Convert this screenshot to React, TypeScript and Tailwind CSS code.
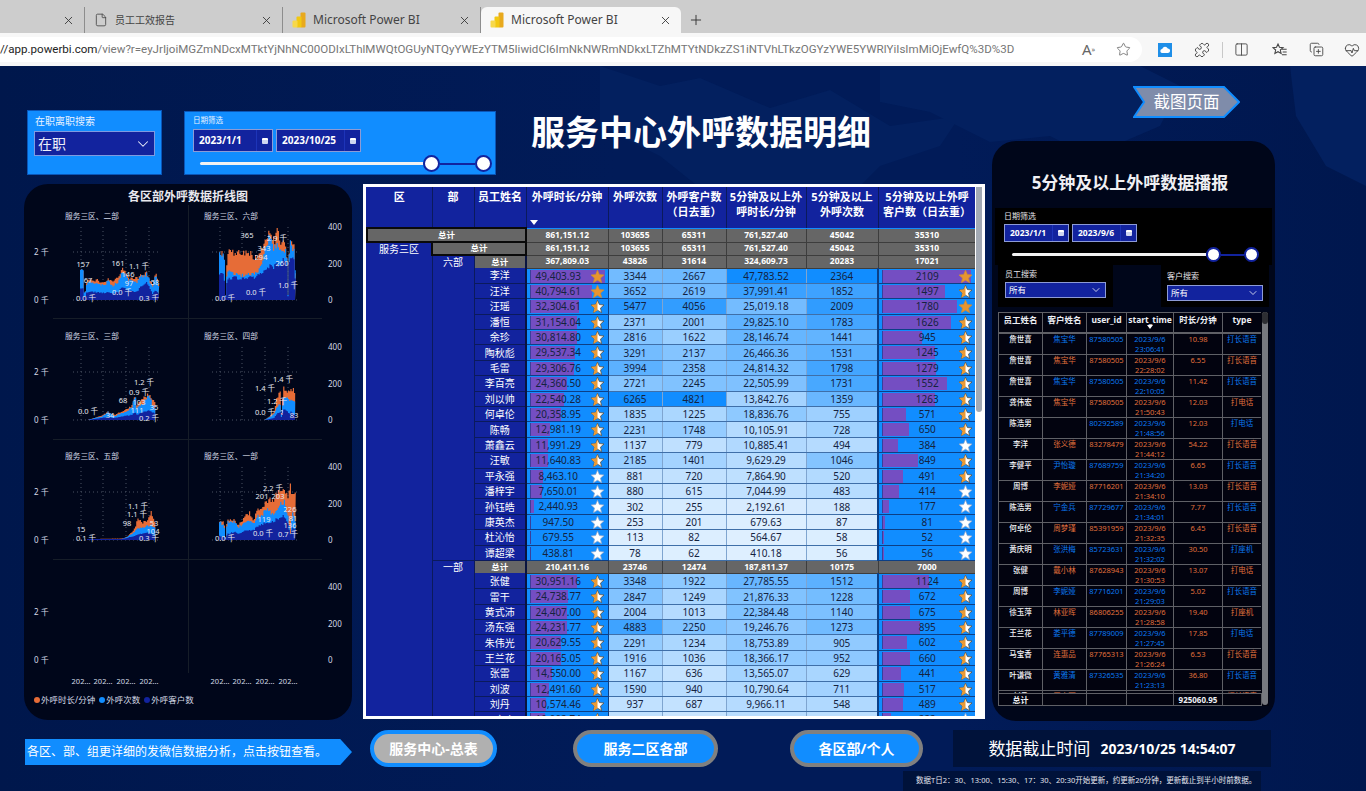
// App.tsx
// Power BI report "服务中心外呼数据明细" shown inside an Edge browser window.
import { ChevronDown, CopyPlus, Columns2, File, HeartPulse, Plus, Puzzle, Star, X } from "lucide-react";

// ── TABLE DATA ──
// name, duration, calls, customers, 5min duration, 5min calls, 5min customers
type Row = [string, number, number, number, number, number, number];

const groupSix: Row[] = [
  ["李洋", 49403.93, 3344, 2667, 47783.52, 2364, 2109],
  ["汪洋", 40794.61, 3652, 2619, 37991.41, 1852, 1497],
  ["汪瑶", 32304.61, 5477, 4056, 25019.18, 2009, 1780],
  ["潘恒", 31154.04, 2371, 2001, 29825.1, 1783, 1626],
  ["余珍", 30814.8, 2816, 1622, 28146.74, 1441, 945],
  ["陶秋彪", 29537.34, 3291, 2137, 26466.36, 1531, 1245],
  ["毛雷", 29306.76, 3994, 2358, 24814.32, 1798, 1279],
  ["李百亮", 24360.5, 2721, 2245, 22505.99, 1731, 1552],
  ["刘以帅", 22540.28, 6265, 4821, 13842.76, 1359, 1263],
  ["何卓伦", 20358.95, 1835, 1225, 18836.76, 755, 571],
  ["陈畅", 12981.19, 2231, 1748, 10105.91, 728, 650],
  ["萧鑫云", 11991.29, 1137, 779, 10885.41, 494, 384],
  ["汪敏", 11640.83, 2185, 1401, 9629.29, 1046, 849],
  ["平永强", 8463.1, 881, 720, 7864.9, 520, 491],
  ["潘梓宇", 7650.01, 880, 615, 7044.99, 483, 414],
  ["孙钰皓", 2440.93, 302, 255, 2192.61, 188, 177],
  ["康英杰", 947.5, 253, 201, 679.63, 87, 81],
  ["杜沁怡", 679.55, 113, 82, 564.67, 58, 52],
  ["谭超梁", 438.81, 78, 62, 410.18, 56, 56],
];

const groupOne: Row[] = [
  ["张健", 30951.16, 3348, 1922, 27785.55, 1512, 1124],
  ["雷干", 24738.77, 2847, 1249, 21876.33, 1228, 672],
  ["黄式沛", 24407.0, 2004, 1013, 22384.48, 1140, 675],
  ["汤东强", 24231.77, 4883, 2250, 19246.76, 1273, 895],
  ["朱伟光", 20629.55, 2291, 1234, 18753.89, 905, 602],
  ["王兰花", 20165.05, 1916, 1036, 18366.17, 952, 660],
  ["张雷", 14550.0, 1167, 636, 13565.07, 629, 441],
  ["刘波", 12491.6, 1590, 940, 10790.64, 711, 517],
  ["刘丹", 10574.46, 937, 687, 9966.11, 548, 489],
  ["马宗泰", 10002.74, 968, 566, 9061.18, 429, 222],
];

const money = (v: number) =>
  v.toLocaleString("en-US", { minimumFractionDigits: 2, maximumFractionDigits: 2 });

// Heat colour between the lightest cell and Power BI blue #118dff
function heat(v: number, max: number) {
  const t = Math.min(1, v / max);
  const mix = (a: number, b: number) => Math.round(a + (b - a) * t);
  return `rgb(${mix(224, 17)},${mix(240, 141)},255)`;
}

const STAR = "M12 2l3 6.9 7.4.7-5.6 4.9 1.7 7.3-6.5-3.9-6.5 3.9 1.7-7.3L1.6 9.6 9 8.9z";
const STAR_LEFT = "M12 2L9 8.9l-7.4.7 5.6 4.9-1.7 7.3 6.5-3.9z";

function RankStar({ level }: { level: 0 | 1 | 2 }) {
  return (
    <svg width="15" height="15" viewBox="0 0 24 24" className="absolute right-[3px] top-0">
      <path
        d={STAR}
        fill={level === 2 ? "#e8952f" : "#ffffff"}
        stroke={level === 2 ? "#c98a3a" : level === 1 ? "#5c4a30" : "#8fa6c8"}
        strokeWidth="1.2"
      />
      {level === 1 && <path d={STAR_LEFT} fill="#eb9a34" />}
    </svg>
  );
}

function BarCell({ value, text, max, full, level, pad }: { value: number; text: string; max: number; full: number; level: 0 | 1 | 2; pad: boolean }) {
  return (
    <td className="h-[15.4px] border-b border-r border-[#0c3f86] bg-[#118dff] p-0">
      <div className={`relative h-[14.4px] leading-[14px] ${pad ? "pr-[18px]" : ""}`}>
        <div
          className="absolute left-[3px] top-[1px] h-[13px] border-l border-[#3a3f9a] bg-[#744ec2]"
          style={{ width: (value / max) * full }}
        />
        <span className="relative">{text}</span>
        <RankStar level={level} />
      </div>
    </td>
  );
}

function DataRow({ row }: { row: Row }) {
  const [name, dur, calls, cust, dur5, calls5, cust5] = row;
  const durLevel = dur >= 40000 ? 2 : dur >= 10000 ? 1 : 0;
  const custLevel = cust5 >= 1700 ? 2 : cust5 >= 430 ? 1 : 0;
  const cells: [string, number, number][] = [
    [String(calls), calls, 6265],
    [String(cust), cust, 4821],
    [money(dur5), dur5, 47783],
    [String(calls5), calls5, 2364],
  ];
  return (
    <tr className="h-[15.4px]">
      <td className="border-b border-r-2 border-b-[#0b1a5c] border-r-[#0a1440] bg-[#12239e] p-0 text-[10px] leading-[14px] text-white">{name}</td>
      <BarCell value={dur} text={money(dur)} max={49403.93} full={75} level={durLevel} pad />
      {cells.map(([text, v, max], i) => (
        <td
          key={i}
          className={`border-b border-b-[#3f6fa8] p-0 leading-[14px] ${i === 3 ? "border-r-2 border-r-[#0c3f86]" : "border-r border-r-[#7fa5d0]"}`}
          style={{ backgroundColor: heat(v, max) }}
        >
          {text}
        </td>
      ))}
      <BarCell value={cust5} text={String(cust5)} max={2109} full={89} level={custLevel} pad={false} />
    </tr>
  );
}

function TotalCells({ values }: { values: string[] }) {
  return (
    <>
      {values.map((v, i) => (
        <td key={i} className="border-b border-r border-[#3d3d3d] bg-[#666666] p-0 text-[8.5px] font-bold leading-none text-white">
          {v}
        </td>
      ))}
    </>
  );
}

function DetailTable() {
  const grand = ["861,151.12", "103655", "65311", "761,527.40", "45042", "35310"];
  return (
    <div className="flex h-[535px] w-[622px] overflow-hidden border-[3px] border-white bg-white">
      <div className="w-[609px] shrink-0 overflow-hidden bg-[#12239e]">
        <table className="w-[609px] table-fixed border-collapse text-center text-[10px] text-[#14233f]">
          <colgroup>
            <col className="w-[65px]" />
            <col className="w-[42px]" />
            <col className="w-[52px]" />
            <col className="w-[82px]" />
            <col className="w-[54px]" />
            <col className="w-[64px]" />
            <col className="w-[80px]" />
            <col className="w-[72px]" />
            <col className="w-[98px]" />
          </colgroup>
          <thead>
            <tr className="h-[41px] align-top text-[11px] font-bold leading-[15px] text-white">
              {["区", "部", "员工姓名", "外呼时长/分钟", "外呼次数", "外呼客户数（日去重）", "5分钟及以上外呼时长/分钟", "5分钟及以上外呼次数", "5分钟及以上外呼客户数（日去重）"].map((h, i) => (
                <th key={h} className="relative border-b border-r border-b-[#118dff] border-r-[#0b1a5c] bg-[#12239e] px-[2px] pt-[2px] font-bold">
                  {h}
                  {i === 3 && <span className="absolute bottom-[3px] left-[3px] h-0 w-0 border-x-[4px] border-t-[5px] border-x-transparent border-t-white" />}
                </th>
              ))}
            </tr>
          </thead>
          <tbody>
            <tr className="h-[14px]">
              <td colSpan={3} className="border-2 border-[#0a0a0a] bg-[#666666] p-0 text-[8.5px] font-bold leading-none text-white">总计</td>
              <TotalCells values={grand} />
            </tr>
            <tr className="h-[13px]">
              <td rowSpan={32} className="border-r border-[#0b1a5c] bg-[#12239e] p-0 align-top text-[10px] leading-[13px] text-white">服务三区</td>
              <td colSpan={2} className="border-2 border-[#0a0a0a] bg-[#666666] p-0 text-[8.5px] font-bold leading-none text-white">总计</td>
              <TotalCells values={grand} />
            </tr>
            <tr className="h-[13px]">
              <td rowSpan={20} className="border-r border-[#0b1a5c] bg-[#12239e] p-0 align-top text-[10px] leading-[13px] text-white">六部</td>
              <td className="border-r-2 border-r-[#0a1440] bg-[#666666] p-0 text-[8.5px] font-bold leading-none text-white">总计</td>
              <TotalCells values={["367,809.03", "43826", "31614", "324,609.73", "20283", "17021"]} />
            </tr>
            {groupSix.map((r) => (
              <DataRow key={r[0]} row={r} />
            ))}
            <tr className="h-[13px]">
              <td rowSpan={11} className="border-r border-t border-[#0b1a5c] bg-[#12239e] p-0 align-top text-[10px] leading-[13px] text-white">一部</td>
              <td className="border-r-2 border-r-[#0a1440] bg-[#666666] p-0 text-[8.5px] font-bold leading-none text-white">总计</td>
              <TotalCells values={["210,411.16", "23746", "12474", "187,811.37", "10175", "7000"]} />
            </tr>
            {groupOne.map((r) => (
              <DataRow key={r[0]} row={r} />
            ))}
          </tbody>
        </table>
      </div>
      {/* scrollbar */}
      <div className="ml-[1px] h-[225px] w-[6px] rounded-b-sm bg-[#a3aab5]" />
    </div>
  );
}

// ── SMALL MULTIPLE CHARTS ──
type Key = [number, number, number, number];

const chartOne: Key[] = [[0, 30, 29, 12], [0.03, 30, 29, 12], [0.05, 2, 2, 1], [0.08, 20, 18, 8], [0.2, 20, 17, 8], [0.3, 18, 14, 7], [0.35, 21, 19, 8], [0.42, 17, 14, 6], [0.48, 24, 18, 8], [0.54, 30, 29, 13], [0.62, 22, 20, 9], [0.72, 22, 18, 8], [0.78, 25, 24, 14], [0.85, 28, 26, 18], [0.92, 15, 13, 6], [0.96, 27, 25, 10], [1, 16, 14, 6]];
const chartTwo: Key[] = [[0, 46, 45, 26], [0.06, 46, 44, 24], [0.08, 2, 2, 2], [0.1, 50, 30, 22], [0.2, 46, 25, 22], [0.3, 47, 25, 22], [0.4, 46, 25, 22], [0.5, 40, 28, 24], [0.52, 44, 30, 26], [0.6, 56, 50, 30], [0.65, 66, 65, 33], [0.72, 58, 50, 33], [0.76, 70, 60, 36], [0.8, 58, 50, 36], [0.88, 56, 52, 42], [0.9, 5, 5, 4], [0.92, 60, 60, 45], [0.98, 55, 50, 40], [1, 20, 20, 15]];
const chartThree: Key[] = [[0, 0, 0, 0], [0.1, 2, 2, 1], [0.2, 4, 3, 2], [0.3, 8, 8, 3], [0.4, 5, 4, 2], [0.55, 10, 8, 4], [0.65, 14, 12, 5], [0.7, 25, 25, 8], [0.72, 14, 12, 5], [0.82, 22, 16, 8], [0.9, 26, 25, 9], [0.95, 20, 16, 8], [1, 18, 10, 6]];
const chartFour: Key[] = [[0, 0, 0, 0], [0.15, 3, 3, 1], [0.3, 8, 6, 2], [0.4, 22, 14, 6], [0.5, 30, 16, 8], [0.55, 3, 3, 2], [0.6, 33, 22, 10], [0.7, 30, 24, 10], [0.8, 28, 18, 6], [0.85, 32, 22, 8], [1, 28, 18, 4]];
const chartFive: Key[] = [[0, 1, 1, 1], [0.5, 1.5, 1, 1], [0.58, 3, 3, 2], [0.68, 10, 8, 4], [0.75, 22, 12, 6], [0.8, 18, 12, 6], [0.88, 18, 14, 7], [0.93, 28, 16, 7], [0.97, 20, 14, 5], [1, 16, 10, 3]];
const chartSix: Key[] = [[0, 19, 18, 4], [0.06, 17, 15, 3], [0.08, 2, 2, 1], [0.1, 20, 18, 6], [0.2, 20, 18, 8], [0.25, 15, 13, 6], [0.35, 25, 18, 10], [0.4, 27, 20, 10], [0.45, 20, 16, 10], [0.5, 33, 25, 14], [0.55, 31, 24, 15], [0.62, 40, 32, 18], [0.7, 40, 25, 18], [0.78, 48, 35, 22], [0.85, 50, 38, 24], [0.9, 42, 25, 18], [0.93, 55, 5, 5], [0.96, 45, 30, 12], [1, 50, 18, 10]];

// Stepped area through the key points, with a small repeatable jitter so it looks like daily data
function area(keys: Key[], column: 1 | 2 | 3, x0: number, x1: number, base: number, seed: number) {
  let s = seed;
  let d = `M${x0} ${base}`;
  for (let x = x0; x <= x1; x += 1.2) {
    const t = (x - x0) / (x1 - x0);
    let i = 0;
    while (i < keys.length - 2 && keys[i + 1][0] < t) i++;
    const a = keys[i];
    const b = keys[i + 1];
    const h = a[column] + ((b[column] - a[column]) * (t - a[0])) / (b[0] - a[0]);
    s = (s * 137 + 73) % 1009;
    const y = base - Math.max(0, h + ((s / 1009 - 0.5) * h) / 6);
    d += `L${x.toFixed(1)} ${y.toFixed(1)}L${(x + 1.2).toFixed(1)} ${y.toFixed(1)}`;
  }
  return `${d}L${x1} ${base}Z`;
}

const leftGrid = [81, 103, 126, 149];
const rightGrid = [220, 242, 265, 288];

const charts = [
  { title: "服务三区、二部", tx: 65, ty: 216, base: 300, x0: 80, x1: 158, keys: chartOne, grid: leftGrid, labels: [[83, 264, "157"], [88, 280, "67"], [118, 263, "161"], [139, 266, "1.1 千"], [128, 274, "146"], [129, 283, "97"], [155, 282, "58"], [86, 298, "0.0 千"], [122, 292, "0.0 千"], [149, 298, "0.3 千"]] },
  { title: "服务三区、六部", tx: 204, ty: 216, base: 300, x0: 219, x1: 295, keys: chartTwo, grid: rightGrid, labels: [[247, 235, "365"], [277, 238, "2.9 千"], [264, 248, "343"], [261, 257, "294"], [282, 263, "260"], [288, 285, "1.0 千"], [256, 292, "0.0 千"], [225, 298, "0.0 千"]] },
  { title: "服务三区、三部", tx: 65, ty: 336, base: 420, x0: 87, x1: 155, keys: chartThree, grid: leftGrid, labels: [[144, 382, "1.2 千"], [139, 392, "0.9 千"], [123, 400, "68"], [139, 402, "103"], [137, 410, "111"], [154, 407, "35"], [88, 411, "0.0 千"], [110, 415, "34"], [149, 418, "0.2 千"]] },
  { title: "服务三区、四部", tx: 204, ty: 336, base: 420, x0: 264, x1: 295, keys: chartFour, grid: rightGrid, labels: [[283, 379, "1.4 千"], [265, 388, "1.4 千"], [277, 401, "1.2 千"], [265, 412, "0.0 千"], [282, 412, "1"], [294, 415, "83"]] },
  { title: "服务三区、五部", tx: 65, ty: 456, base: 540, x0: 87, x1: 155, keys: chartFive, grid: leftGrid, labels: [[138, 506, "1.1 千"], [137, 514, "1.1 千"], [81, 529, "15"], [127, 523, "98"], [154, 523, "53"], [153, 531, "104"], [86, 538, "0.1 千"], [149, 538, "0.3 千"]] },
  { title: "服务三区、一部", tx: 204, ty: 456, base: 540, x0: 219, x1: 295, keys: chartSix, grid: rightGrid, labels: [[273, 488, "2.2 千"], [262, 496, "201"], [278, 496, "203"], [290, 509, "226"], [264, 519, "119"], [293, 518, "81"], [290, 525, "136"], [263, 533, "0.0 千"], [288, 534, "0.7 千"], [225, 538, "0.0 千"]] },
] as const;

function AxisLabels({ base }: { base: number }) {
  return (
    <g className="fill-[#d5dae6] text-[8px]">
      <text x="34" y={base - 48 + 3}>2 千</text>
      <text x="34" y={base + 3}>0 千</text>
      <text x="328" y={base - 73 + 3}>400</text>
      <text x="328" y={base - 36 + 3}>200</text>
      <text x="328" y={base + 3}>0</text>
    </g>
  );
}

function SmallMultiples() {
  return (
    <svg width="328" height="485" viewBox="24 205 328 485" className="block">
      <g stroke="#161d28" strokeWidth="1">
        <line x1="53" y1="318.5" x2="322" y2="318.5" />
        <line x1="53" y1="439.5" x2="322" y2="439.5" />
        <line x1="53" y1="559.5" x2="322" y2="559.5" />
        <line x1="188.5" y1="205" x2="188.5" y2="673" />
      </g>
      {[300, 420, 540, 660].map((b) => (
        <AxisLabels key={b} base={b} />
      ))}
      {charts.map((c, i) => (
        <g key={c.title}>
          <text x={c.tx} y={c.ty + 3} className="fill-[#d5dae6] text-[7.7px]">{c.title}</text>
          <g stroke="#4a5263" strokeWidth="1" strokeDasharray="1 3">
            {c.grid.map((x) => (
              <line key={x} x1={x} y1={c.base - 73} x2={x} y2={c.base} />
            ))}
            <line x1={c.grid[0] - 8} y1={c.base - 48} x2={c.grid[3] + 11} y2={c.base - 48} />
            <line x1={c.grid[0] - 8} y1={c.base} x2={c.grid[3] + 11} y2={c.base} />
          </g>
          <path d={area(c.keys as unknown as Key[], 1, c.x0, c.x1, c.base, 11 + i)} fill="#e66c37" />
          <path d={area(c.keys as unknown as Key[], 2, c.x0, c.x1, c.base, 211 + i)} fill="#118dff" />
          <path d={area(c.keys as unknown as Key[], 3, c.x0, c.x1, c.base, 421 + i)} fill="#12239e" />
          <g className="fill-[#e6e9f0] text-[7.5px]" textAnchor="middle">
            {c.labels.map(([x, y, t], j) => (
              <text key={j} x={x} y={y + 3}>{t}</text>
            ))}
          </g>
        </g>
      ))}
      <g className="fill-[#d5dae6] text-[7.5px]" textAnchor="middle">
        {[81, 103, 126, 149, 220, 242, 265, 288].map((x) => (
          <text key={x} x={x} y="684">202...</text>
        ))}
      </g>
    </svg>
  );
}

function LegendItem({ color, label }: { color: string; label: string }) {
  return (
    <span className="flex items-center gap-[1px]">
      <span className={`h-[6px] w-[6px] rounded-full ${color}`} />
      {label}
    </span>
  );
}

function ChartPanel() {
  return (
    <div className="h-[536px] w-[328px] overflow-hidden rounded-[24px] bg-[#00061a]">
      <div className="h-[21px] pt-[5px] text-center text-[12px] font-bold leading-[15px] text-[#e8e8ee]">各区部外呼数据折线图</div>
      <SmallMultiples />
      <div className="mt-[4px] flex gap-[4px] pl-[10px] text-[8.5px] leading-[12px] text-[#d5dae6]">
        <LegendItem color="bg-[#e66c37]" label="外呼时长/分钟" />
        <LegendItem color="bg-[#118dff]" label="外呼次数" />
        <LegendItem color="bg-[#12239e]" label="外呼客户数" />
      </div>
    </div>
  );
}

// ── FILTER CONTROLS ──
function DateBox({ text, width, small }: { text: string; width: string; small?: boolean }) {
  return (
    <div className={`flex items-center border border-[#8d9bd6] bg-[#12239e] font-bold text-white ${width} ${small ? "h-[18px] text-[8.5px]" : "h-[23px] text-[10px]"}`}>
      <span className="flex-1 pl-[5px]">{text}</span>
      <span className="flex h-full w-[16px] items-center justify-center border-l border-[#1d34b8]">
        <span className="h-[6px] w-[6px] rounded-[1px] border-t-2 border-white bg-[#cfd6f0]" />
      </span>
    </div>
  );
}

function RangeSlider({ track, gap, size }: { track: string; gap: string; size: string }) {
  const handle = `shrink-0 rounded-full border-2 border-[#12239e] bg-white ${size}`;
  return (
    <div className="flex items-center">
      <div className={`h-[3px] rounded-l-full bg-[#f2f2f2] ${track}`} />
      <div className={handle} />
      <div className={`h-[2px] bg-[#12239e] ${gap}`} />
      <div className={handle} />
    </div>
  );
}

function SelectBox({ text, width }: { text: string; width: string }) {
  return (
    <div className={`flex h-[16px] items-center justify-between border border-[#8d9bd6] bg-[#12239e] px-[3px] text-[8.5px] text-white ${width}`}>
      {text}
      <ChevronDown size={12} strokeWidth={1.5} />
    </div>
  );
}

// ── CALL LOG ──
const calls = [
  ["詹世喜", "焦宝华", "87580505", "23:06:41", "10.98", "打长语音"],
  ["詹世喜", "焦宝华", "87580505", "22:28:02", "6.55", "打长语音"],
  ["詹世喜", "焦宝华", "87580505", "22:10:05", "11.42", "打长语音"],
  ["龚伟宏", "焦宝华", "87580505", "21:50:43", "12.03", "打电话"],
  ["陈浩男", "", "80292589", "21:48:56", "12.03", "打电话"],
  ["李洋", "张义德", "83278479", "21:44:12", "54.22", "打长语音"],
  ["李健平", "尹怡璇", "87689759", "21:34:20", "6.65", "打长语音"],
  ["周博", "李妮娅", "87716201", "21:34:10", "13.03", "打长语音"],
  ["陈浩男", "宁金兵", "87729677", "21:34:01", "7.77", "打长语音"],
  ["何卓伦", "周梦瑾", "85391959", "21:32:35", "6.45", "打长语音"],
  ["黄庆明", "张洪梅", "85723631", "21:32:02", "30.50", "打座机"],
  ["张健", "戴小林", "87628943", "21:30:53", "13.07", "打电话"],
  ["周博", "李妮娅", "87716201", "21:29:03", "5.02", "打长语音"],
  ["徐玉萍", "林亚晖", "86806255", "21:28:58", "19.40", "打座机"],
  ["王兰花", "娄平德", "87789009", "21:27:45", "17.85", "打电话"],
  ["马宝香", "连惠品", "87765313", "21:26:24", "6.53", "打长语音"],
  ["叶谦微", "黄雅清", "87326535", "21:23:13", "36.80", "打长语音"],
  ["刘丹", "王小雨", "87118456", "21:20:10", "10.33", "打长语音"],
];

const logCols = (
  <colgroup>
    <col className="w-[44px]" />
    <col className="w-[44px]" />
    <col className="w-[40px]" />
    <col className="w-[47px]" />
    <col className="w-[49px]" />
    <col className="w-[39px]" />
  </colgroup>
);

function CallLog() {
  const line = "border border-[#5f6066]";
  return (
    <div className="flex">
      <div className="w-[263px] shrink-0">
        <div className="h-[381px] overflow-hidden">
          <table className="w-[263px] table-fixed border-collapse text-center text-[7.5px] leading-[10px]">
            {logCols}
            <thead>
              <tr className="h-[20px] align-top text-[8.5px] font-bold leading-[11px] text-[#eceef3]">
                {["员工姓名", "客户姓名", "user_id", "start_time", "时长/分钟", "type"].map((h, i) => (
                  <th key={h} className={`${line} border-b-2 p-0 pt-[1px] font-bold`}>
                    {h}
                    {i === 3 && <span className="mx-auto block h-0 w-0 border-x-[3px] border-t-[4px] border-x-transparent border-t-white" />}
                  </th>
                ))}
              </tr>
            </thead>
            <tbody>
              {calls.map((c, i) => {
                const tone = i % 2 === 0 ? "text-[#0b78f0]" : "text-[#e0703c]";
                return (
                  <tr key={i} className="h-[21px] align-top">
                    <td className={`${line} p-0 font-medium text-[#f4f5f8]`}>{c[0]}</td>
                    <td className={`${line} p-0 ${tone}`}>{c[1]}</td>
                    <td className={`${line} p-0 ${tone}`}>{c[2]}</td>
                    <td className={`${line} p-0 ${tone}`}>2023/9/6<br />{c[3]}</td>
                    <td className={`${line} p-0 text-[#e0703c]`}>{c[4]}</td>
                    <td className={`${line} p-0 ${tone}`}>{c[5]}</td>
                  </tr>
                );
              })}
            </tbody>
          </table>
        </div>
        <table className="w-[263px] table-fixed border-collapse text-center text-[8px] font-bold leading-[11px] text-[#eef0f5]">
          {logCols}
          <tbody>
            <tr className="h-[12px]">
              <td className={`${line} p-0`}>总计</td>
              <td className={`${line} p-0`} />
              <td className={`${line} p-0`} />
              <td className={`${line} p-0`} />
              <td className={`${line} p-0`}>925060.95</td>
              <td className={`${line} p-0`} />
            </tr>
          </tbody>
        </table>
      </div>
      {/* scrollbar */}
      <div className="ml-[1px] h-[393px] w-[6px] rounded-sm bg-[#77797f]">
        <div className="h-[12px] rounded-sm bg-[#2d2e33]" />
      </div>
    </div>
  );
}

function BroadcastPanel() {
  return (
    <div className="mt-[23px] h-[580px] w-[283px] overflow-hidden rounded-[24px] bg-[#00061a]">
      <div className="h-[67px] pr-[7px] pt-[31px] text-center text-[17px] font-bold leading-[22px] text-[#f0f0f4]">5分钟及以上外呼数据播报</div>
      <div className="ml-[3px] h-[57px] w-[277px] bg-black pl-[9px] pt-[2px]">
        <div className="text-[8px] leading-[11px] text-[#e4e4e8]">日期筛选</div>
        <div className="mt-[3px] flex gap-[3px]">
          <DateBox text="2023/1/1" width="w-[65px]" small />
          <DateBox text="2023/9/6" width="w-[65px]" small />
        </div>
        <div className="ml-[8px] mt-[5px]">
          <RangeSlider track="w-[194px]" gap="w-[23px]" size="h-[15px] w-[15px]" />
        </div>
      </div>
      <div className="flex">
        <div className="ml-[6px] h-[42px] w-[115px] bg-black pl-[7px] pt-[3px]">
          <div className="text-[8px] leading-[11px] text-[#e4e4e8]">员工搜索</div>
          <div className="mt-[3px]"><SelectBox text="所有" width="w-[101px]" /></div>
        </div>
        <div className="ml-[48px] h-[42px] w-[108px] bg-black pl-[6px] pt-[5px]">
          <div className="text-[8px] leading-[11px] text-[#e4e4e8]">客户搜索</div>
          <div className="mt-[4px]"><SelectBox text="所有" width="w-[96px]" /></div>
        </div>
      </div>
      <div className="ml-[6px] mt-[5px] w-[271px] bg-[#02030f]">
        <CallLog />
      </div>
    </div>
  );
}

// ── BROWSER CHROME ──
function PowerBiIcon() {
  return (
    <svg width="14" height="16" viewBox="0 0 14 16" className="shrink-0">
      <rect x="8.5" y="0.5" width="5" height="15" rx="1" fill="#e8a91d" />
      <rect x="4.5" y="4.500" width="5" height="11" rx="1" fill="#f2c811" />
      <rect x="0.5" y="8.500" width="5" height="7" rx="1" fill="#f7d84a" />
    </svg>
  );
}

function Tab({ title, icon, active, width, small }: { title: string; icon?: React.ReactNode; active?: boolean; width: string; small?: boolean }) {
  return (
    <div className={`flex h-[26px] shrink-0 items-center pl-[9px] pr-[9px] text-[#444] ${small ? "text-[10px]" : "text-[12px]"} ${width} ${active ? "rounded-t-[6px] bg-[#f7f7f7]" : "border-r border-[#8d8d8d]"}`}>
      {icon}
      <span className="ml-[7px] flex-1 truncate">{title}</span>
      <X size={13} strokeWidth={1.6} className="text-[#333]" />
    </div>
  );
}

function BrowserBar() {
  return (
    <>
      <div className="flex h-[33px] items-end bg-[#cdcdcd]">
        <Tab title="" width="w-[85px]" />
        <Tab title="员工工效报告" small width="w-[198px]" icon={<File size={14} strokeWidth={1.4} className="shrink-0 text-[#444]" />} />
        <Tab title="Microsoft Power BI" width="w-[198px]" icon={<PowerBiIcon />} />
        <Tab title="Microsoft Power BI" width="w-[200px]" active icon={<PowerBiIcon />} />
        <Plus size={16} strokeWidth={1.4} className="mb-[5px] ml-[7px] text-[#333]" />
      </div>
      <div className="flex h-[33px] items-center bg-[#f7f7f7] text-[#444]">
        <div className="flex h-[25px] w-[1142px] items-center overflow-hidden rounded-r-full bg-white pr-[12px] font-['Roboto',sans-serif] text-[11.55px]">
          <span className="flex-1 whitespace-nowrap">
            <span className="text-[#222]">//app.powerbi.com</span>
            <span className="text-[#767676]">/view?r=eyJrIjoiMGZmNDcxMTktYjNhNC00ODIxLThlMWQtOGUyNTQyYWEzYTM5IiwidCI6ImNkNWRmNDkxLTZhMTYtNDkzZS1iNTVhLTkzOGYzYWE5YWRlYiIsImMiOjEwfQ%3D%3D</span>
          </span>
        </div>
        <div className="-ml-[60px] flex items-center">
          <span className="w-[34px] text-[15px] text-[#666]">A<sup className="text-[7px]">»</sup></span>
          <Star size={15} strokeWidth={1.3} className="text-[#666]" />
        </div>
        <div className="ml-[27px] flex h-[14px] w-[14px] items-center justify-center bg-[#1f8fe8]">
          <svg width="10" height="7" viewBox="0 0 10 7"><path d="M2.5 7a2 2 0 0 1-.3-4 3 3 0 0 1 5.6-.6A2.3 2.3 0 0 1 7.7 7z" fill="#fff" /></svg>
        </div>
        <Puzzle size={16} strokeWidth={1.4} className="ml-[22px]" />
        <span className="ml-[12px] h-[16px] w-px bg-[#c8c8c8]" />
        <Columns2 size={15} strokeWidth={1.4} className="ml-[11px]" />
        <svg width="16" height="16" viewBox="0 0 24 24" fill="none" stroke="currentColor" strokeWidth="1.6" className="ml-[23px]">
          <path d="M9 3l2.2 5 5.3.5-4 3.500 1.2 5.200L9 14.500 4.300 17.200 5.500 12l-4-3.500L6.800 8z" />
          <path d="M15 11h7M16 15h6M15 19h7" />
        </svg>
        <CopyPlus size={15} strokeWidth={1.4} className="ml-[21px]" />
        <HeartPulse size={16} strokeWidth={1.4} className="ml-[20px]" />
      </div>
    </>
  );
}

// ── BOTTOM BUTTONS ──
function NavButton({ label, className }: { label: string; className: string }) {
  return (
    <div className={`flex h-[37px] shrink-0 items-center justify-center rounded-full border-[4px] text-[14px] font-bold text-white ${className}`}>
      {label}
    </div>
  );
}

export default function App() {
  return (
    <div className="h-[791px] w-[1366px] overflow-hidden bg-[#001a52] font-['Noto_Sans','Noto_Sans_CJK_SC',sans-serif]">
      <BrowserBar />
      <div className="relative h-[725px] bg-[linear-gradient(90deg,#00174c_0%,#011b58_45%,#011b58_70%,#00174e_100%)]">
        {/* faint world map behind the report */}
        <svg width="1366" height="725" viewBox="0 66 1366 725" className="absolute inset-0">
          <g fill="#03205f">
            <path d="M600 66l60 20 40-8 70 30 60-18 60 36 70-10-20 30-60 20-40 40-70-20-60 10-50-40-60-30z" />
            <path d="M880 66h260l40 20-20 40-70 30-40-20-60 6-60-30-50-10z" />
            <path d="M1290 66h76v120l-40-20-30-50z" />
          </g>
        </svg>

        <div className="relative">
          <div className="flex h-[664px] pl-[24px]">
            <div className="w-[961px] shrink-0">
              <div className="flex h-[118px] items-start pt-[44px]">
                <div className="ml-[3px] h-[65px] w-[135px] border border-[#0b56b8] bg-[#118dff] px-[6px] pt-[3px]">
                  <div className="pl-[1px] text-[10px] leading-[14px] text-[#eaf3ff]">在职离职搜索</div>
                  <div className="mt-[3px] flex h-[25px] items-center justify-between border border-[#7f9ae0] bg-[#12239e] pl-[3px] pr-[2px] text-[14px] text-[#eef0fa]">
                    在职
                    <ChevronDown size={18} strokeWidth={1.4} />
                  </div>
                </div>
                <div className="ml-[22px] mt-[1px] h-[64px] w-[312px] border border-[#0b56b8] bg-[#118dff] pl-[8px] pt-[3px]">
                  <div className="text-[7.5px] leading-[11px] text-[#eaf3ff]">日期筛选</div>
                  <div className="mt-[3px] flex gap-[3px]">
                    <DateBox text="2023/1/1" width="w-[80px]" />
                    <DateBox text="2023/10/25" width="w-[85px]" />
                  </div>
                  <div className="ml-[7px] mt-[3px]">
                    <RangeSlider track="w-[223px]" gap="w-[35px]" size="h-[17px] w-[17px]" />
                  </div>
                </div>
                <h1 className="ml-[35px] whitespace-nowrap text-[34px] font-bold leading-[44px] text-white">服务中心外呼数据明细</h1>
              </div>
              <div className="flex gap-[11px]">
                <ChartPanel />
                <DetailTable />
              </div>
            </div>

            <div className="ml-[7px] w-[283px] shrink-0">
              <div className="relative ml-[141px] mt-[20px] flex h-[32px] w-[107px] items-center justify-center text-[16.5px] text-white">
                <svg width="107" height="32" viewBox="0 0 107 32" className="absolute inset-0">
                  <path d="M1 1h90l15 15-15 15H1l10-15z" fill="#7f8caa" stroke="#118dff" strokeWidth="2" />
                </svg>
                <span className="relative">截图页面</span>
              </div>
              <BroadcastPanel />
            </div>
          </div>

          <div className="flex h-[61px] items-start">
            <div className="ml-[25px] mt-[9px] flex h-[26px] w-[327px] shrink-0 items-center bg-[#118dff] pl-[2px] text-[12px] text-white [clip-path:polygon(0_0,96.4%_0,100%_50%,96.4%_100%,0_100%)]">
              各区、部、组更详细的发微信数据分析，点击按钮查看。
            </div>
            <NavButton label="服务中心-总表" className="ml-[18px] w-[127px] border-[#118dff] bg-[#b0b0b0]" />
            <NavButton label="服务二区各部" className="ml-[76px] w-[145px] border-[#808080] bg-[#118dff]" />
            <NavButton label="各区部/个人" className="ml-[72px] w-[133px] border-[#808080] bg-[#118dff]" />
            <div className="ml-[30px] w-[318px] shrink-0">
              <div className="flex h-[37px] items-center justify-center gap-[10px] bg-[#00123a] text-white">
                <span className="text-[17px]">数据截止时间</span>
                <span className="text-[14px] font-bold">2023/10/25 14:54:07</span>
              </div>
              <div className="-ml-[50px] mt-[4px] flex h-[20px] w-[358px] items-center whitespace-nowrap bg-[#00123a] pl-[13px] text-[7.5px] text-[#e4e6ee]">
                数据T日2：30、13:00、15:30、17：30、20:30开始更新，约更新20分钟，更新截止到半小时前数据。
              </div>
            </div>
          </div>
        </div>
      </div>
    </div>
  );
}
